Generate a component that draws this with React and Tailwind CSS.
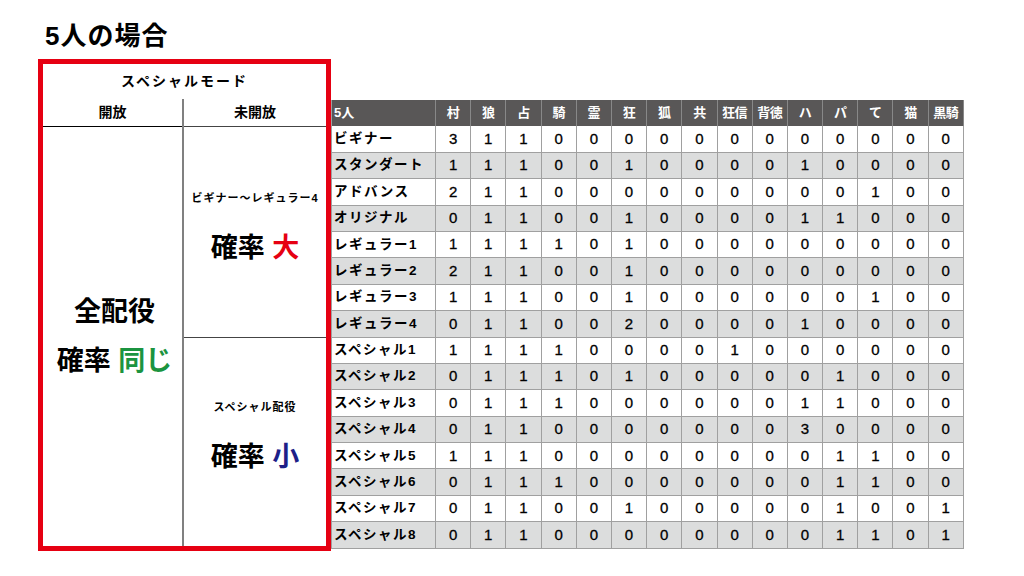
import React from 'react';

const headers = ['村', '狼', '占', '騎', '霊', '狂', '狐', '共', '狂信', '背徳', 'ハ', 'パ', 'て', '猫', '黒騎'];

const rows = [
  ['ビギナー', [3, 1, 1, 0, 0, 0, 0, 0, 0, 0, 0, 0, 0, 0, 0]],
  ['スタンダート', [1, 1, 1, 0, 0, 1, 0, 0, 0, 0, 1, 0, 0, 0, 0]],
  ['アドバンス', [2, 1, 1, 0, 0, 0, 0, 0, 0, 0, 0, 0, 1, 0, 0]],
  ['オリジナル', [0, 1, 1, 0, 0, 1, 0, 0, 0, 0, 1, 1, 0, 0, 0]],
  ['レギュラー1', [1, 1, 1, 1, 0, 1, 0, 0, 0, 0, 0, 0, 0, 0, 0]],
  ['レギュラー2', [2, 1, 1, 0, 0, 1, 0, 0, 0, 0, 0, 0, 0, 0, 0]],
  ['レギュラー3', [1, 1, 1, 0, 0, 1, 0, 0, 0, 0, 0, 0, 1, 0, 0]],
  ['レギュラー4', [0, 1, 1, 0, 0, 2, 0, 0, 0, 0, 1, 0, 0, 0, 0]],
  ['スペシャル1', [1, 1, 1, 1, 0, 0, 0, 0, 1, 0, 0, 0, 0, 0, 0]],
  ['スペシャル2', [0, 1, 1, 1, 0, 1, 0, 0, 0, 0, 0, 1, 0, 0, 0]],
  ['スペシャル3', [0, 1, 1, 1, 0, 0, 0, 0, 0, 0, 1, 1, 0, 0, 0]],
  ['スペシャル4', [0, 1, 1, 0, 0, 0, 0, 0, 0, 0, 3, 0, 0, 0, 0]],
  ['スペシャル5', [1, 1, 1, 0, 0, 0, 0, 0, 0, 0, 0, 1, 1, 0, 0]],
  ['スペシャル6', [0, 1, 1, 1, 0, 0, 0, 0, 0, 0, 0, 1, 1, 0, 0]],
  ['スペシャル7', [0, 1, 1, 0, 0, 1, 0, 0, 0, 0, 0, 1, 0, 0, 1]],
  ['スペシャル8', [0, 1, 1, 0, 0, 0, 0, 0, 0, 0, 0, 1, 1, 0, 1]],
];

const font = { fontFamily: '"Liberation Sans", "Noto Sans CJK JP", sans-serif' };

const Prob = ({ word, color }) => (
  <div className="text-[27px] leading-[32px] font-bold text-black">
    確率 <span className={color}>{word}</span>
  </div>
);

const ModeBox = () => (
  <div className="w-[293px] h-[492px] border-[5px] border-[#e60012] flex flex-col shrink-0">
    <div className="h-[35px] flex items-center justify-center text-[14px] font-bold tracking-[2px]">スペシャルモード</div>
    <div className="flex flex-1">
      {/* 開放 */}
      <div className="w-[141px] flex flex-col border-r-2 border-[#808080]">
        <div className="h-[28px] flex items-center justify-center text-[14px] font-bold border-b border-black">開放</div>
        <div className="flex-1 flex flex-col items-center justify-center gap-[17px] pl-[4px]">
          <div className="text-[27px] leading-[32px] font-bold">全配役</div>
          <Prob word="同じ" color="text-[#1b9440]" />
        </div>
      </div>
      {/* 未開放 */}
      <div className="flex-1 flex flex-col">
        <div className="h-[28px] flex items-center justify-center text-[14px] font-bold border-b border-[#444]">未開放</div>
        <div className="h-[211px] flex flex-col items-center justify-center gap-[25px] pb-[10px] border-b border-[#444]">
          <div className="text-[11px] font-bold tracking-[1px]">ビギナー〜レギュラー4</div>
          <Prob word="大" color="text-[#e60012]" />
        </div>
        <div className="flex-1 flex flex-col items-center justify-center gap-[25px] pb-[12px]">
          <div className="text-[11px] font-bold tracking-[1px]">スペシャル配役</div>
          <Prob word="小" color="text-[#1d2088]" />
        </div>
      </div>
    </div>
  </div>
);

const RoleTable = () => (
  <div className="mt-[41px] grid grid-cols-[104px_repeat(15,35.2px)] auto-rows-[26.4px] border-l border-[#a0a0a0]">
    <div className="bg-[#595757] text-white text-[13px] font-bold flex items-center pl-[2px] border-r border-[#888]">5人</div>
    {headers.map(h => (
      <div key={h} className="bg-[#595757] text-white text-[13px] font-bold flex items-center justify-center border-r border-[#888] tracking-[-0.5px]">{h}</div>
    ))}
    {rows.map(([name, vals], i) => {
      const bg = i % 2 === 0 ? 'bg-white' : 'bg-[#dcdddd]';
      return (
        <React.Fragment key={name}>
          <div className={`${bg} text-[13.5px] font-bold tracking-[1.5px] flex items-center pl-[2px] border-r border-b border-[#a0a0a0]`}>{name}</div>
          {vals.map((v, j) => (
            <div key={j} className={`${bg} text-[15px] flex items-center justify-center border-r border-b border-[#a0a0a0] [-webkit-text-stroke:0.3px_black]`}>{v}</div>
          ))}
        </React.Fragment>
      );
    })}
  </div>
);

export default function App() {
  return (
    <div className="w-[1024px] h-[576px] bg-white text-black overflow-hidden" style={font}>
      <div className="pl-[45px] pt-[21px] text-[26px] leading-[31px] font-bold tracking-[1px]">5人の場合</div>
      <div className="flex items-start ml-[38px] mt-[7px]">
        <ModeBox />
        <RoleTable />
      </div>
    </div>
  );
}
